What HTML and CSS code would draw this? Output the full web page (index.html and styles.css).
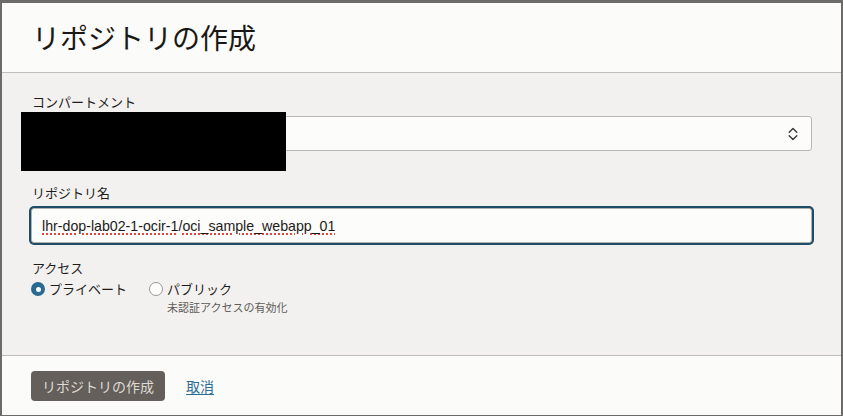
FILE: index.html
```html
<!DOCTYPE html>
<html lang="ja">
<head>
<meta charset="utf-8">
<title>リポジトリの作成</title>
<link rel="stylesheet" href="styles.css">
</head>
<body>
<div class="dialog">
  <header class="dialog-header">
    <h1 class="dialog-title">リポジトリの作成</h1>
  </header>
  <section class="dialog-body">
    <div class="field-label first">コンパートメント</div>
    <div class="select">
      <span class="select-value"></span>
      <svg class="chevrons" width="10" height="16" viewBox="0 0 10 16">
        <path d="M1.2 6.2 L5 2.4 L8.8 6.2" fill="none" stroke="#3a3836" stroke-width="1.4" stroke-linecap="round" stroke-linejoin="round"/>
        <path d="M1.2 9.8 L5 13.6 L8.8 9.8" fill="none" stroke="#3a3836" stroke-width="1.4" stroke-linecap="round" stroke-linejoin="round"/>
      </svg>
    </div>
    <div class="field-label second">リポジトリ名</div>
    <div class="text-input"><span class="misspelled">lhr-dop-lab02-1-ocir-1</span>/<span class="misspelled">oci_sample_webapp_01</span></div>
    <div class="field-label third">アクセス</div>
    <div class="radio-group">
      <div class="radio-option">
        <span class="radio checked"></span>
        <div class="radio-text"><span class="radio-label">プライベート</span></div>
      </div>
      <div class="radio-option">
        <span class="radio"></span>
        <div class="radio-text">
          <span class="radio-label">パブリック</span>
          <span class="radio-help">未認証アクセスの有効化</span>
        </div>
      </div>
    </div>
  </section>
  <footer class="dialog-footer">
    <button class="btn-primary">リポジトリの作成</button>
    <a class="link" href="#">取消</a>
  </footer>
</div>
<div class="redaction"></div>
</body>
</html>
```
FILE: styles.css
```css
html, body {
  margin: 0;
  padding: 0;
}
body {
  width: 843px;
  height: 416px;
  background: #6c6b6a;
  font-family: "Noto Sans CJK JP", "Noto Sans", sans-serif;
  color: #161513;
  overflow: hidden;
  position: relative;
}
.dialog {
  margin: 3px 2px 0 2px;
  width: 839px;
  height: 412px;
  background: #fbfbf9;
  display: flex;
  flex-direction: column;
  box-sizing: border-box;
}
.dialog-header {
  height: 70px;
  box-sizing: border-box;
  border-bottom: 1px solid #bfbdba;
  display: flex;
  align-items: center;
  padding: 0 30px 2px;
}
.dialog-title {
  margin: 0;
  font-size: 28px;
  font-weight: 400;
  line-height: 36px;
  color: #1a1816;
}
.dialog-body {
  height: 283px;
  box-sizing: border-box;
  background: #f2f1ef;
  border-bottom: 1px solid #bfbdba;
  padding: 19px 29px 0 29px;
  display: flex;
  flex-direction: column;
}
.field-label {
  font-size: 13px;
  line-height: 20px;
  color: #1f1d1b;
  padding-left: 1px;
}
.field-label.first { margin-bottom: 4px; }
.field-label.second { margin-top: 32px; margin-bottom: 5px; }
.field-label.third { margin-top: 15px; }
.select {
  height: 35px;
  box-sizing: border-box;
  border: 1px solid #b9b7b4;
  border-radius: 3px;
  background: #fcfcfb;
  display: flex;
  align-items: center;
  justify-content: space-between;
  padding: 0 13px 0 10px;
}
.chevrons {
  display: block;
}
.text-input {
  height: 35px;
  box-sizing: border-box;
  border: 1px solid #b3b1ae;
  border-radius: 3px;
  background: #fcfcfb;
  box-shadow: 0 0 0 2px #1f4c67;
  display: flex;
  align-items: center;
  padding: 0 10px;
  font-family: "Liberation Sans", Arial, sans-serif;
  font-size: 14.2px;
  color: #1c1a18;
  white-space: pre;
}
.misspelled {
  text-decoration: underline dotted #e0463c;
  text-decoration-thickness: 1.5px;
  text-underline-offset: 3px;
}
.radio-group {
  display: flex;
  align-items: flex-start;
  margin-top: 1px;
  gap: 22px;
}
.radio-option {
  display: flex;
  align-items: flex-start;
  gap: 4px;
}
.radio {
  width: 14px;
  height: 14px;
  box-sizing: border-box;
  border-radius: 50%;
  border: 1px solid #9b9996;
  background: #fdfdfc;
  margin-top: 3px;
  position: relative;
  flex: none;
}
.radio.checked {
  border: none;
  background: #2a6b92;
}
.radio.checked::after {
  content: "";
  position: absolute;
  left: 4.5px;
  top: 4.5px;
  width: 5px;
  height: 5px;
  border-radius: 50%;
  background: #ffffff;
}
.radio-text {
  display: flex;
  flex-direction: column;
}
.radio-label {
  font-size: 13px;
  line-height: 20px;
  color: #1f1d1b;
}
.radio-help {
  font-size: 11px;
  line-height: 16px;
  color: #5f5c59;
}
.dialog-footer {
  flex: 1;
  display: flex;
  align-items: center;
  padding: 0 29px;
  gap: 21px;
  background: #fbfbf9;
}
.btn-primary {
  height: 30px;
  padding: 0 11px;
  border: none;
  border-radius: 4px;
  background: #645f5a;
  color: #dedad5;
  font-family: "Noto Sans CJK JP", "Noto Sans", sans-serif;
  font-size: 14px;
  line-height: 30px;
  margin-top: 1px;
}
.link {
  font-size: 14px;
  color: #2e6c93;
  text-decoration: underline;
  text-underline-offset: 2px;
}
.redaction {
  position: absolute;
  left: 21px;
  top: 112px;
  width: 265px;
  height: 59px;
  background: #000;
}
```
